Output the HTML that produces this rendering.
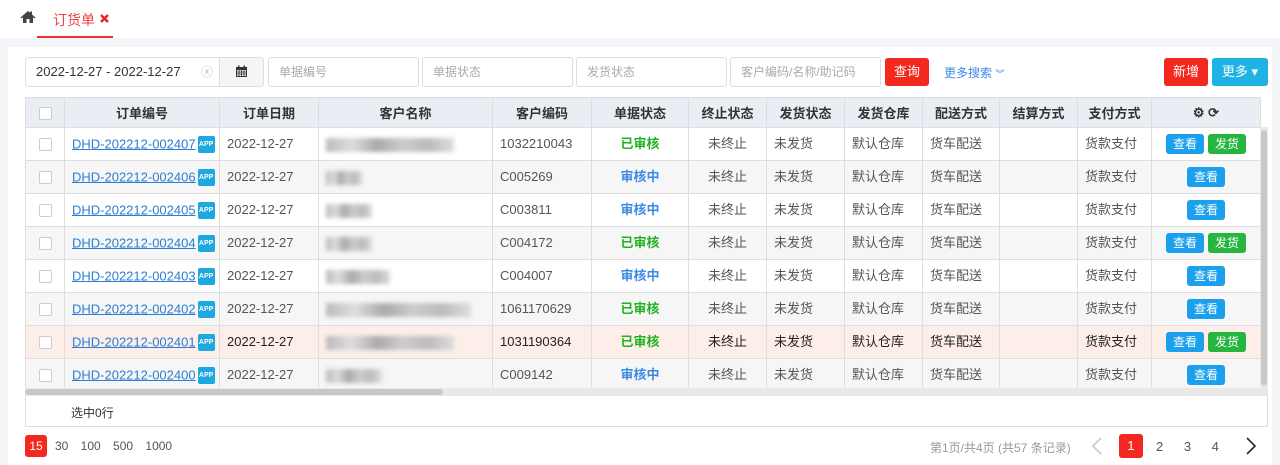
<!DOCTYPE html>
<html><head><meta charset="utf-8"><style>
*{box-sizing:border-box;margin:0;padding:0}
body{width:1280px;height:465px;background:#fff;font-family:"Liberation Sans","Noto Sans CJK SC",sans-serif;font-size:13px;color:#555;position:relative;overflow:hidden}
.abs{position:absolute}
.top{left:0;top:0;width:1280px;height:38px;background:#fff}
.band{left:0;top:38px;width:1280px;height:9px;background:#f4f5f9}
.inp{position:absolute;top:57px;height:30px;border:1px solid #ddd;border-radius:3px;color:#aaa;font-size:12px;line-height:28px;padding-left:10px;background:#fff}
.btn{position:absolute;color:#fff;border-radius:3px;text-align:center;font-size:13px}
table{position:absolute;left:25px;top:97px;width:1235px;border-collapse:collapse;table-layout:fixed}
th{height:30px;background:#eaedf4;color:#333;font-weight:bold;font-size:13px;border:1px solid #ddd;text-align:center}
td{height:33px;border:1px solid #ddd;padding-left:7px;white-space:nowrap;overflow:hidden;font-size:13px;color:#555;vertical-align:middle;line-height:18px}
tr.e td{background:#f6f6f6}
tr.p td{background:#fdeeea;color:#222}
td.c{text-align:center;padding-left:0}
.cb{display:inline-block;width:13px;height:13px;border:1px solid #ccc;background:#fff;border-radius:2px;vertical-align:middle}
a{color:#2a7fd4;text-decoration:underline;vertical-align:middle}
.app{display:inline-block;width:17px;height:17px;background:#1ea8e0;color:#fff;font-size:7px;font-weight:bold;line-height:17px;text-align:center;border-radius:2px;vertical-align:middle;margin-left:2px}
tr td.g{color:#1fb31f;font-weight:bold}
tr td.b{color:#3b8ae6;font-weight:bold}
.bl{display:inline-block;height:14px;background:linear-gradient(90deg,#bbb,#ddd,#aaa,#ccc,#bbb,#ddd);filter:blur(2px);vertical-align:middle}
.v,.s{display:inline-block;width:38px;height:20px;line-height:20px;border-radius:3px;color:#fff;font-size:12px;text-align:center}
.v{background:#1ba0ee}.s{background:#26b640;margin-left:4px}
</style></head><body>
<div class="abs top"></div>
<svg class="abs" style="left:20px;top:10px" width="16" height="14" viewBox="0 0 16 14"><path d="M8 1L0.5 7.5l1 1L3 7.2V13h3.5V9h3v4H13V7.2l1.5 1.3 1-1L12 4.5V1.5h-2v1.2z" fill="#444"/></svg>
<div class="abs" style="left:53px;top:10px;color:#f04040;font-size:14px">订货单</div>
<svg class="abs" style="left:100px;top:14px" width="9" height="9" viewBox="0 0 9 9"><path d="M1 1L8 8M8 1L1 8" stroke="#e82020" stroke-width="2.4"/></svg>
<div class="abs" style="left:37px;top:36px;width:76px;height:2px;background:#e83030"></div>
<div class="abs band"></div>
<div class="abs" style="left:0;top:47px;width:8px;height:418px;background:#f4f5f9"></div>
<div class="abs" style="left:1272px;top:47px;width:8px;height:418px;background:#f4f5f9"></div>

<div class="inp" style="left:25px;width:195px;color:#333;font-size:13px;border-radius:3px 0 0 3px">2022-12-27 - 2022-12-27<span style="position:absolute;left:175px;top:0;color:#bbb;font-size:12px">ⓧ</span></div>
<div class="inp" style="left:219px;width:45px;background:#f5f5f5;border-radius:0 3px 3px 0;padding:0;text-align:center;color:#333">
<svg width="13" height="13" viewBox="0 0 13 13" style="margin-top:7px"><rect x="1" y="2" width="11" height="10" fill="#333"/><rect x="2" y="5" width="9" height="6" fill="#eee"/><path d="M2 7h9M2 9h9M4 5v6M6.5 5v6M9 5v6" stroke="#333" stroke-width=".8"/><rect x="3" y="0.5" width="1.5" height="3" fill="#333"/><rect x="8.5" y="0.5" width="1.5" height="3" fill="#333"/></svg></div>
<div class="inp" style="left:268px;width:151px">单据编号</div>
<div class="inp" style="left:422px;width:151px">单据状态</div>
<div class="inp" style="left:576px;width:151px">发货状态</div>
<div class="inp" style="left:730px;width:151px">客户编码/名称/助记码</div>
<div class="btn" style="left:885px;top:58px;width:44px;height:28px;line-height:28px;background:#f3281f">查询</div>
<div class="abs" style="left:944px;top:64px;color:#3b8ae6;font-size:12px">更多搜索 <span style="font-size:9px">︾</span></div>
<div class="btn" style="left:1164px;top:58px;width:44px;height:28px;line-height:28px;background:#f3281f">新增</div>
<div class="btn" style="left:1212px;top:58px;width:56px;height:28px;line-height:28px;background:#1fb2e4">更多 ▾</div>

<table>
<colgroup><col style="width:39px"><col style="width:155px"><col style="width:99px"><col style="width:174px"><col style="width:99px"><col style="width:97px"><col style="width:78px"><col style="width:78px"><col style="width:78px"><col style="width:77px"><col style="width:78px"><col style="width:74px"><col style="width:109px"></colgroup>
<tr><th><span class="cb"></span></th><th>订单编号</th><th>订单日期</th><th>客户名称</th><th>客户编码</th><th>单据状态</th><th>终止状态</th><th>发货状态</th><th>发货仓库</th><th>配送方式</th><th>结算方式</th><th>支付方式</th><th>⚙ ⟳</th></tr>
<tr><td class="c"><span class="cb"></span></td><td><a>DHD-202212-002407</a><span class="app">APP</span></td><td>2022-12-27</td><td><span class="bl" style="width:128px"></span></td><td>1032210043</td><td class="c g">已审核</td><td class="c">未终止</td><td>未发货</td><td>默认仓库</td><td>货车配送</td><td></td><td>货款支付</td><td class="c"><span class="v">查看</span><span class="s">发货</span></td></tr>
<tr class="e"><td class="c"><span class="cb"></span></td><td><a>DHD-202212-002406</a><span class="app">APP</span></td><td>2022-12-27</td><td><span class="bl" style="width:36px"></span></td><td>C005269</td><td class="c b">审核中</td><td class="c">未终止</td><td>未发货</td><td>默认仓库</td><td>货车配送</td><td></td><td>货款支付</td><td class="c"><span class="v">查看</span></td></tr>
<tr><td class="c"><span class="cb"></span></td><td><a>DHD-202212-002405</a><span class="app">APP</span></td><td>2022-12-27</td><td><span class="bl" style="width:46px"></span></td><td>C003811</td><td class="c b">审核中</td><td class="c">未终止</td><td>未发货</td><td>默认仓库</td><td>货车配送</td><td></td><td>货款支付</td><td class="c"><span class="v">查看</span></td></tr>
<tr class="e"><td class="c"><span class="cb"></span></td><td><a>DHD-202212-002404</a><span class="app">APP</span></td><td>2022-12-27</td><td><span class="bl" style="width:46px"></span></td><td>C004172</td><td class="c g">已审核</td><td class="c">未终止</td><td>未发货</td><td>默认仓库</td><td>货车配送</td><td></td><td>货款支付</td><td class="c"><span class="v">查看</span><span class="s">发货</span></td></tr>
<tr><td class="c"><span class="cb"></span></td><td><a>DHD-202212-002403</a><span class="app">APP</span></td><td>2022-12-27</td><td><span class="bl" style="width:64px"></span></td><td>C004007</td><td class="c b">审核中</td><td class="c">未终止</td><td>未发货</td><td>默认仓库</td><td>货车配送</td><td></td><td>货款支付</td><td class="c"><span class="v">查看</span></td></tr>
<tr class="e"><td class="c"><span class="cb"></span></td><td><a>DHD-202212-002402</a><span class="app">APP</span></td><td>2022-12-27</td><td><span class="bl" style="width:145px"></span></td><td>1061170629</td><td class="c g">已审核</td><td class="c">未终止</td><td>未发货</td><td>默认仓库</td><td>货车配送</td><td></td><td>货款支付</td><td class="c"><span class="v">查看</span></td></tr>
<tr class="p"><td class="c"><span class="cb"></span></td><td><a>DHD-202212-002401</a><span class="app">APP</span></td><td>2022-12-27</td><td><span class="bl" style="width:128px"></span></td><td>1031190364</td><td class="c g">已审核</td><td class="c">未终止</td><td>未发货</td><td>默认仓库</td><td>货车配送</td><td></td><td>货款支付</td><td class="c"><span class="v">查看</span><span class="s">发货</span></td></tr>
<tr class="e"><td class="c"><span class="cb"></span></td><td><a>DHD-202212-002400</a><span class="app">APP</span></td><td>2022-12-27</td><td><span class="bl" style="width:56px"></span></td><td>C009142</td><td class="c b">审核中</td><td class="c">未终止</td><td>未发货</td><td>默认仓库</td><td>货车配送</td><td></td><td>货款支付</td><td class="c"><span class="v">查看</span></td></tr>
</table>
<div class="abs" style="left:1260px;top:127px;width:8px;height:261px;background:#e8e8e8"></div>
<div class="abs" style="left:1261px;top:130px;width:6px;height:255px;background:#c8c8c8;border-radius:3px"></div>
<div class="abs" style="left:25px;top:388px;width:1243px;height:8px;background:#e8e8e8"></div>
<div class="abs" style="left:25px;top:389px;width:418px;height:6px;background:#c8c8c8;border-radius:3px"></div>
<div class="abs" style="left:25px;top:396px;width:1243px;height:31px;border:1px solid #ddd;border-top:none"></div>
<div class="abs" style="left:71px;top:404px;color:#333;font-size:12px">选中0行</div>
<div class="btn" style="left:25px;top:435px;width:22px;height:22px;line-height:22px;background:#f3281f;font-size:12px">15</div>
<div class="abs" style="left:55px;top:439px;font-size:12px;color:#555;word-spacing:9px">30 100 500 1000</div>
<div class="abs" style="left:930px;top:439px;font-size:12px;color:#999">第1页/共4页 (共57 条记录)</div>
<svg class="abs" style="left:1091px;top:437px" width="12" height="18" viewBox="0 0 12 18"><path d="M10 1L2 9l8 8" fill="none" stroke="#ccc" stroke-width="1.8"/></svg>
<div class="btn" style="left:1119px;top:434px;width:24px;height:24px;line-height:24px;background:#f3281f;font-size:13px">1</div>
<div class="abs" style="left:1156px;top:439px;font-size:13px;color:#555;word-spacing:17px">2 3 4</div>
<svg class="abs" style="left:1245px;top:437px" width="12" height="18" viewBox="0 0 12 18"><path d="M2 1l8 8-8 8" fill="none" stroke="#333" stroke-width="1.8"/></svg>
</body></html>
